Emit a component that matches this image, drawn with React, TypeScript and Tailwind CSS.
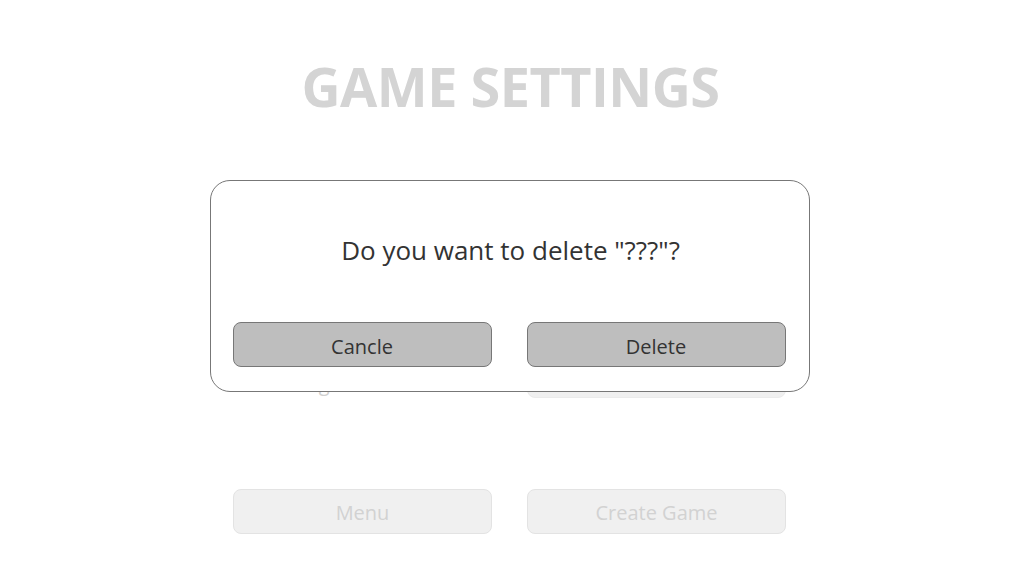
export default function App() {
  const font = { fontFamily: '"Open Sans", "Noto Sans", sans-serif' };
  const rows = [
    { label: "Players", value: "4" },
    { label: "Big Blind Size", value: "20" },
  ];
  return (
    <div className="relative w-full h-[571px] bg-white overflow-hidden" style={font}>
      {/* Settings page, dimmed behind the dialog */}
      <div className="flex flex-col items-center pt-[52px] pr-[2px]">
        <h1 className="text-[54px] leading-[68px] font-bold text-[#d4d4d4] tracking-[-0.5px] pl-[2px]">GAME SETTINGS</h1>
        <div className="w-[553px] mt-[157px] flex flex-col gap-[33px]">
          {rows.map((row) => (
            <div key={row.label} className="grid grid-cols-2 gap-[35px] h-[44px]">
              <div className="flex items-end justify-center text-[20px] leading-[28px] text-[#d0d0d0]">{row.label}</div>
              <div className="flex items-center justify-center rounded-lg bg-[#f0f0f0] border border-[#ebebeb] text-[20px] text-[#d0d0d0]">
                {row.value}
              </div>
            </div>
          ))}
        </div>
        <div className="w-[553px] mt-[91px] grid grid-cols-2 gap-[35px]">
          <button className="h-[45px] pt-[3px] rounded-lg bg-[#f0f0f0] border border-[#e3e3e3] text-[20px] text-[#d2d2d2]">Menu</button>
          <button className="h-[45px] pt-[3px] rounded-lg bg-[#f0f0f0] border border-[#e3e3e3] text-[20px] text-[#d2d2d2]">Create Game</button>
        </div>
      </div>

      {/* Confirm dialog */}
      <div className="absolute inset-0 flex items-center justify-center pr-[2px]">
        <div className="w-[600px] h-[212px] bg-white border border-[#777777] rounded-[20px] pl-[22px] pr-[23px] pt-[53px] flex flex-col">
          <p className="text-[26px] leading-[32px] text-[#333333] text-center pl-[3px]">Do you want to delete "???"?</p>
          <div className="mt-[56px] grid grid-cols-2 gap-[35px]">
            <button className="h-[45px] pt-[6px] rounded-lg bg-[#bebebe] border border-[#777777] text-[20px] text-[#333333]">Cancle</button>
            <button className="h-[45px] pt-[6px] rounded-lg bg-[#bebebe] border border-[#777777] text-[20px] text-[#333333]">Delete</button>
          </div>
        </div>
      </div>
    </div>
  );
}
